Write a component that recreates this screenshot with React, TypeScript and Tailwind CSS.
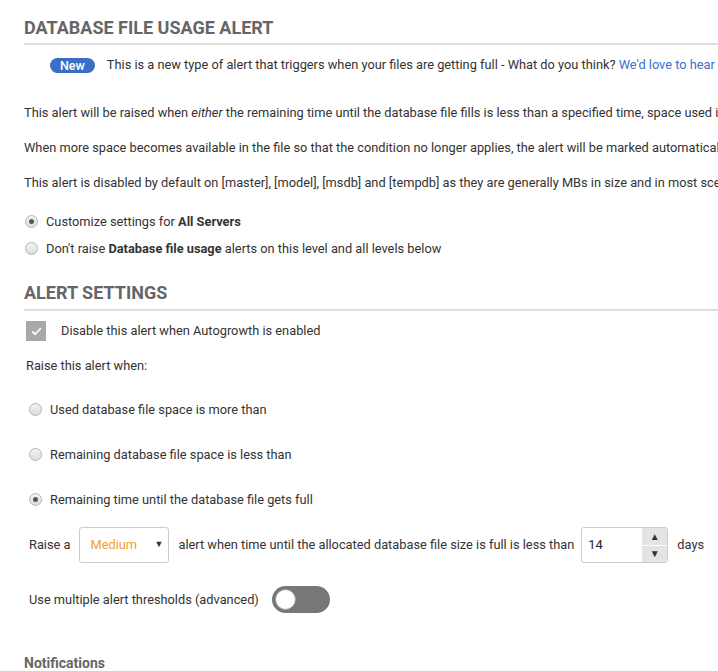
import React from 'react';

const Radio = ({ checked }: { checked?: boolean }) => (
  <span className="flex h-[13px] w-[13px] shrink-0 items-center justify-center rounded-full border border-[#b5b5b5] bg-gradient-to-b from-[#f4f4f4] to-[#dcdcdc]">
    {checked && <span className="h-[5px] w-[5px] rounded-full bg-[#555]" />}
  </span>
);

const SectionHeading = ({ title, className }: { title: string; className: string }) => (
  <h2
    className={`border-b-2 border-[#dedede] text-[18px] font-bold uppercase leading-6 text-[#666] ${className}`}
  >
    {title}
  </h2>
);

const App = () => {
  const paragraphs = [
    <>
      This alert will be raised when <em>either</em> the remaining time until the database file fills is less than a
      specified time, space used in the file is more than a specified amount
    </>,
    <>
      When more space becomes available in the file so that the condition no longer applies, the alert will be marked
      automatically as ended
    </>,
    <>
      This alert is disabled by default on [master], [model], [msdb] and [tempdb] as they are generally MBs in size and
      in most scenarios are not a concern
    </>,
  ];

  const conditions = [
    { id: 1, label: 'Used database file space is more than', checked: false },
    { id: 2, label: 'Remaining database file space is less than', checked: false },
    { id: 3, label: 'Remaining time until the database file gets full', checked: true },
  ];

  return (
    <div
      className="h-[671px] w-[718px] overflow-hidden bg-white pl-6 text-[12.8px] text-[#333]"
      style={{ fontFamily: 'Roboto, "Liberation Sans", sans-serif' }}
    >
      <SectionHeading title="Database file usage alert" className="mt-[16px] pb-[3px]" />

      <div className="flex h-10 items-center whitespace-nowrap pl-[26px]">
        <span className="mr-3 rounded-full bg-[#3b6fc5] px-[10px] text-[12.5px] font-medium leading-[15px] text-white">
          New
        </span>
        <span>
          This is a new type of alert that triggers when your files are getting full - What do you think?{' '}
          <a className="text-[#3d6fcb]">We'd love to hear from you</a>
        </span>
      </div>

      <div className="mt-[10px]">
        {paragraphs.map((p, i) => (
          <p key={i} className="flex h-[35px] items-center whitespace-nowrap">
            <span>{p}</span>
          </p>
        ))}
      </div>

      <div className="mt-2">
        <label className="flex h-[27px] items-center gap-[8px] whitespace-nowrap pl-[1px]">
          <Radio checked />
          <span>
            Customize settings for <b className="font-bold">All Servers</b>
          </span>
        </label>
        <label className="flex h-[27px] items-center gap-[8px] whitespace-nowrap pl-[1px]">
          <Radio />
          <span>
            Don't raise <b className="font-bold">Database file usage</b> alerts on this level and all levels below
          </span>
        </label>
      </div>

      <SectionHeading title="Alert settings" className="mt-[19px] pb-[4px]" />

      <div className="flex h-[40px] items-center whitespace-nowrap pl-[2px]">
        <span className="flex h-5 w-5 items-center justify-center bg-[#a8a8a8]">
          <svg viewBox="0 0 16 16" className="h-[11px] w-[11px]" fill="none">
            <path d="M2.5 8.5l3.5 3.5L13.5 4" stroke="white" strokeWidth="2.6" strokeLinecap="round" strokeLinejoin="round" />
          </svg>
        </span>
        <span className="ml-[15px]">Disable this alert when Autogrowth is enabled</span>
      </div>

      <p className="flex h-[30px] items-center pl-[2px]">Raise this alert when:</p>

      <div className="mt-[6px]">
        {conditions.map((c) => (
          <label key={c.id} className="flex h-[45px] items-center gap-[8px] whitespace-nowrap pl-[5px]">
            <Radio checked={c.checked} />
            <span>{c.label}</span>
          </label>
        ))}
      </div>

      <div className="mt-[5px] flex h-[36px] items-center whitespace-nowrap pl-[5px]">
        <span>Raise a</span>
        <div className="ml-[9px] flex h-[36px] w-[90px] items-center justify-between rounded-[3px] border border-[#ccc] pl-[10px] pr-[5px]">
          <span className="text-[#f0a032]">Medium</span>
          <span className="text-[9px] text-[#333]">▼</span>
        </div>
        <span className="ml-[9px]">alert when time until the allocated database file size is full is less than</span>
        <div className="ml-[7px] flex h-[36px] w-[87px] overflow-hidden rounded-[3px] border border-[#ccc]">
          <span className="flex flex-1 items-center pl-[6px] text-[#222]">14</span>
          <div className="flex w-[25px] flex-col gap-px bg-white">
            <span className="flex flex-1 items-center justify-center bg-[#e4e4e4] text-[10px] text-[#333]">▲</span>
            <span className="flex flex-1 items-center justify-center bg-[#e4e4e4] text-[10px] text-[#333]">▼</span>
          </div>
        </div>
        <span className="ml-[9px]">days</span>
      </div>

      <div className="mt-[23px] flex h-[27px] items-center whitespace-nowrap pl-[5px]">
        <span>Use multiple alert thresholds (advanced)</span>
        <span className="ml-[13px] flex h-[27px] w-[58px] items-center rounded-full bg-[#777] pl-[3px]">
          <span className="h-[21px] w-[21px] rounded-full border border-[#999] bg-white" />
        </span>
      </div>

      <h3 className="mt-[40px] text-[14px] font-bold leading-5 text-[#666]">Notifications</h3>
    </div>
  );
};

export default App;
